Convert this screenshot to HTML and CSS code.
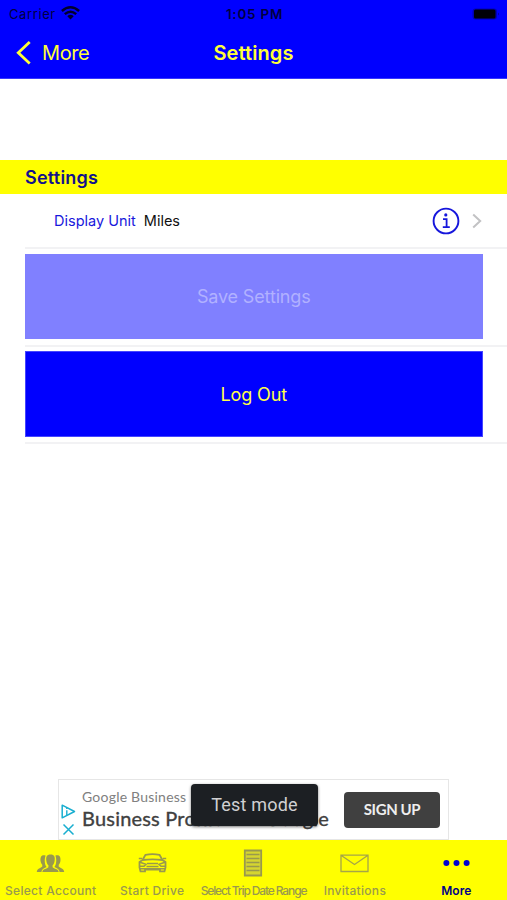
FILE: index.html
```html
<!DOCTYPE html>
<html lang="en">
<head>
<meta charset="utf-8">
<title>Settings</title>
<link rel="stylesheet" href="styles.css">
</head>
<body>
<div class="screen">
  <header class="top">
    <div class="status">
      <div class="carrier"><span>Carrier</span>
        <svg width="19" height="14" viewBox="0 0 19 14"><path d="M.9 5Q9.5-2.4 18.1 5M3.8 8.1Q9.5 3.3 15.2 8.1" fill="none" stroke="#00002e" stroke-width="2.5"/><path d="M6.3 10.2Q9.5 7.4 12.7 10.2L9.5 13.4Z" fill="#00002e"/></svg>
      </div>
      <span class="time">1:05 PM</span>
      <div class="battery"><svg width="28" height="12" viewBox="0 0 28 12"><rect x=".5" y=".5" width="24.5" height="11" rx="3" fill="#0000b8"/><rect x="2" y="1.5" width="21.5" height="9" rx="1.5" fill="#000008"/><path d="M26 4.5q2 1.5 0 3z" fill="#0000a0"/></svg></div>
    </div>
    <nav class="nav">
      <a class="back"><svg width="16" height="26" viewBox="0 0 16 26"><path d="M13.7 2L2.3 12.7L13.7 23.4" fill="none" stroke="#ffff38" stroke-width="2.8"/></svg><span>More</span></a>
      <h1>Settings</h1>
      <span></span>
    </nav>
  </header>
  <main>
    <h2>Settings</h2>
    <div class="unit">
      <span class="label">Display Unit</span><span class="value">Miles</span>
      <svg class="info" width="28" height="28" viewBox="0 0 28 28"><circle cx="14" cy="14" r="12.4" fill="none" stroke="#1616dc" stroke-width="1.9"/><circle cx="13.8" cy="7.9" r="1.6" fill="#1616dc"/><path d="M11 12.2H14.6V19.8M10.8 20.2H17.8" fill="none" stroke="#1616dc" stroke-width="1.8"/></svg>
      <svg class="chevron" width="10" height="16" viewBox="0 0 10 16"><path d="M1.2 1.5L8.2 8L1.2 14.5" fill="none" stroke="#c2c2c4" stroke-width="2"/></svg>
    </div>
    <div class="cell"><button class="save" disabled><span>Save Settings</span></button></div>
    <div class="cell"><button class="logout"><span>Log Out</span></button></div>
  </main>
  <aside class="ad">
    <div class="adicons">
      <svg width="15" height="15" viewBox="0 0 15 15"><path d="M1.2 1.2L13.5 7.5L1.2 13.8Z" fill="none" stroke="#19aed0" stroke-width="1.5" stroke-linejoin="round"/><path d="M5.8 6.3V11M5.8 3.5V5" stroke="#19aed0" stroke-width="1.4"/></svg>
      <svg width="13" height="13" viewBox="0 0 13 13"><path d="M1.5 1.5L11.5 11.5M11.5 1.5L1.5 11.5" stroke="#19aed0" stroke-width="1.5"/></svg>
    </div>
    <div class="adtext"><p class="brand">Google Business</p><p class="headline"><span>Business Profile</span><span>Google</span></p></div>
    <button class="signup"><span>SIGN UP</span></button>
    <div class="toast"><span>Test mode</span></div>
  </aside>
  <footer class="tabs">
    <div class="tab account"><div class="icon"><svg width="29" height="20" viewBox="0 0 29 20"><g fill="#99994d"><path d="M9.6 1.5C5.3.1 4 3.2 4.6 7.3C4.9 9.4 5.8 10.3 6.3 10.8V12.5C5 14.2 1 14 .8 18H5.4C5.8 15.2 7.5 14.2 10.6 13C8.8 10.8 8 6 9.6 1.5ZM19.4 1.5C23.7.1 25 3.2 24.4 7.3C24.1 9.4 23.2 10.3 22.7 10.8V12.5C24 14.2 28 14 28.2 18H23.6C23.2 15.2 21.5 14.2 18.4 13C20.2 10.8 21 6 19.4 1.5Z"/><path d="M14.5.5C18.5.5 19.2 3 18.6 7C18.3 9.5 17.4 10.5 16.6 11.3V13.2C18 15 22.3 14.5 22.7 18H6.3C6.7 14.5 11 15 12.4 13.2V11.3C11.6 10.5 10.7 9.5 10.4 7C9.8 3 10.5.5 14.5.5Z"/></g></svg></div><span>Select Account</span></div>
    <div class="tab drive"><div class="icon"><svg width="29" height="20" viewBox="0 0 29 20"><g fill="none" stroke="#99994d" stroke-width="1.8"><path d="M4.5 7L7.5 1.8Q14.5.4 21.5 1.8L24.5 7L27.5 9V14.5L26.5 18.3H22V16.5H7V18.3H2.5L1.5 14.5V9L4.5 7Q14.5 5.7 24.5 7"/><path d="M.8 5.6H4M25 5.6H28.2M2 9.2L8 11.3L6 13.3H2M27 9.2L21 11.3L23 13.3H27M9 10.4H20M8.5 13.4H20.5M2 15.8H27" stroke-width="1.5"/></g></svg></div><span>Start Drive</span></div>
    <div class="tab range"><div class="icon"><svg width="20" height="28" viewBox="0 0 20 28"><path d="M1.8 1.5H18.2V26.5H1.8Z" fill="#d5d530" stroke="#99994d" stroke-width="1.8"/><path d="M3.5 5.5H16.5M3.5 9.5H16.5M3.5 13.5H16.5M3.5 17.5H16.5M3.5 21.5H16.5" fill="none" stroke="#99994d" stroke-width="1.5"/></svg></div><span>Select Trip Date Range</span></div>
    <div class="tab invite"><div class="icon"><svg width="29" height="19" viewBox="0 0 29 19"><path d="M1 1.2H28V17.5H1ZM1 1.2L14.5 10.5L28 1.2" fill="none" stroke="#a5a548" stroke-width="1.3"/></svg></div><span>Invitations</span></div>
    <div class="tab more"><div class="icon"><svg width="27" height="8" viewBox="0 0 27 8"><g fill="#0000d0"><circle cx="3.4" cy="4" r="3"/><circle cx="13.5" cy="4" r="3"/><circle cx="23.6" cy="4" r="3"/></g></svg></div><span>More</span></div>
  </footer>
</div>
</body>
</html>
```
FILE: styles.css
```css
* { box-sizing: border-box; }
body { margin: 0; background: #fff; font-family: Inter, "Liberation Sans", sans-serif; }
h1, h2, p { margin: 0; }
button { border: 0; padding: 0; font: inherit; }
svg { display: block; flex: none; }
span { white-space: nowrap; }
.screen { width: 507px; height: 900px; display: flex; flex-direction: column; overflow: hidden; }
.top { height: 79px; background: #00f; border-bottom: 1px solid #3838ff; flex: none; }
.status { height: 27px; display: grid; grid-template-columns: 1fr auto 1fr; align-items: center; padding: 1px 7px 0 9px; font-size: 13px; color: #000040; }
.carrier { display: flex; align-items: center; gap: 5px; letter-spacing: .6px; }
.carrier svg { margin-top: -2px; }
.time { font-weight: 600; font-size: 13.5px; letter-spacing: .75px; }
.battery { justify-self: end; }
.nav { height: 51px; display: grid; grid-template-columns: 1fr auto 1fr; align-items: center; padding: 0 16px; color: #ffff38; }
.back { display: flex; align-items: center; gap: 10px; font-size: 20px; letter-spacing: -.4px; }
h1 { font-size: 20px; font-weight: 600; letter-spacing: .1px; }
main { flex: 1; padding-top: 81px; }
h2 { height: 34px; line-height: 35px; padding-left: 25px; background: #ff0; color: #11118c; font-size: 18px; letter-spacing: .22px; font-weight: 600; }
.unit { height: 53px; padding: 0 25px 0 54px; display: flex; align-items: center; font-size: 14.5px; }
.label { color: #1818dc; }
.value { color: #111; margin-left: 8px; }
.info { margin-left: auto; }
.chevron { margin-left: 12px; }
.cell { height: 98px; padding: 7px 25px 0 25px; background: linear-gradient(#f2f2f4, #f2f2f4) 25px 0 / 100% 2px no-repeat; }
.cell + .cell { height: 97px; padding-top: 6px; }
.cell button { display: flex; align-items: center; justify-content: center; width: 457.5px; height: 85px; font-size: 18px; letter-spacing: -.15px; }
.cell .logout { height: 86px; background: #00f; color: #ffff48; border: 1px solid #4545ff; }
.save { background: #8080ff; color: #b1b1ff; }
main::after { content: ""; display: block; height: 2px; margin-left: 25px; background: #f2f2f4; }
.ad { width: 391px; height: 61px; margin-left: 58px; border: 1px solid #e6e6e6; display: flex; position: relative; flex: none; }
.adicons { width: 23px; padding: 24px 0 0 2px; display: flex; flex-direction: column; gap: 4px; }
.adicons svg + svg { margin-left: 1px; }
.adtext { font-family: Lato, sans-serif; flex: 1; }
.brand { font-size: 14px; line-height: 18px; margin-top: 8px; color: #808080; letter-spacing: .22px; }
.headline { display: flex; justify-content: space-between; width: 247px; font-size: 20px; line-height: 24px; color: #404040; letter-spacing: .2px; -webkit-text-stroke: .35px #404040; }
.signup { width: 96px; height: 36px; margin: 12px 8px 0 0; padding-bottom: 3px; background: #404040; color: #eee; border-radius: 4px; font: 700 15px Lato, sans-serif; letter-spacing: -.4px; }
.toast { position: absolute; left: 132px; top: 4px; width: 127px; height: 42px; display: flex; align-items: center; justify-content: center; padding-bottom: 1px; background: #1c1f23; color: #d0d0d2; border-radius: 4px; font: 18px Roboto, sans-serif; letter-spacing: .2px; box-shadow: 0 1px 3px #0008; }
.tabs { height: 60px; background: #ff0; display: grid; grid-template-columns: repeat(5, minmax(0, 1fr)); flex: none; color: #99994d; }
.tab { display: flex; flex-direction: column; align-items: center; font-size: 12px; line-height: 16px; font-weight: 500; letter-spacing: .3px; }
.icon { height: 43px; display: flex; align-items: center; padding-top: 3px; }
.account .icon { padding-top: 5px; }
.range { letter-spacing: -1.13px; }
.more { color: #000088; letter-spacing: 0; font-weight: 600; }
```
